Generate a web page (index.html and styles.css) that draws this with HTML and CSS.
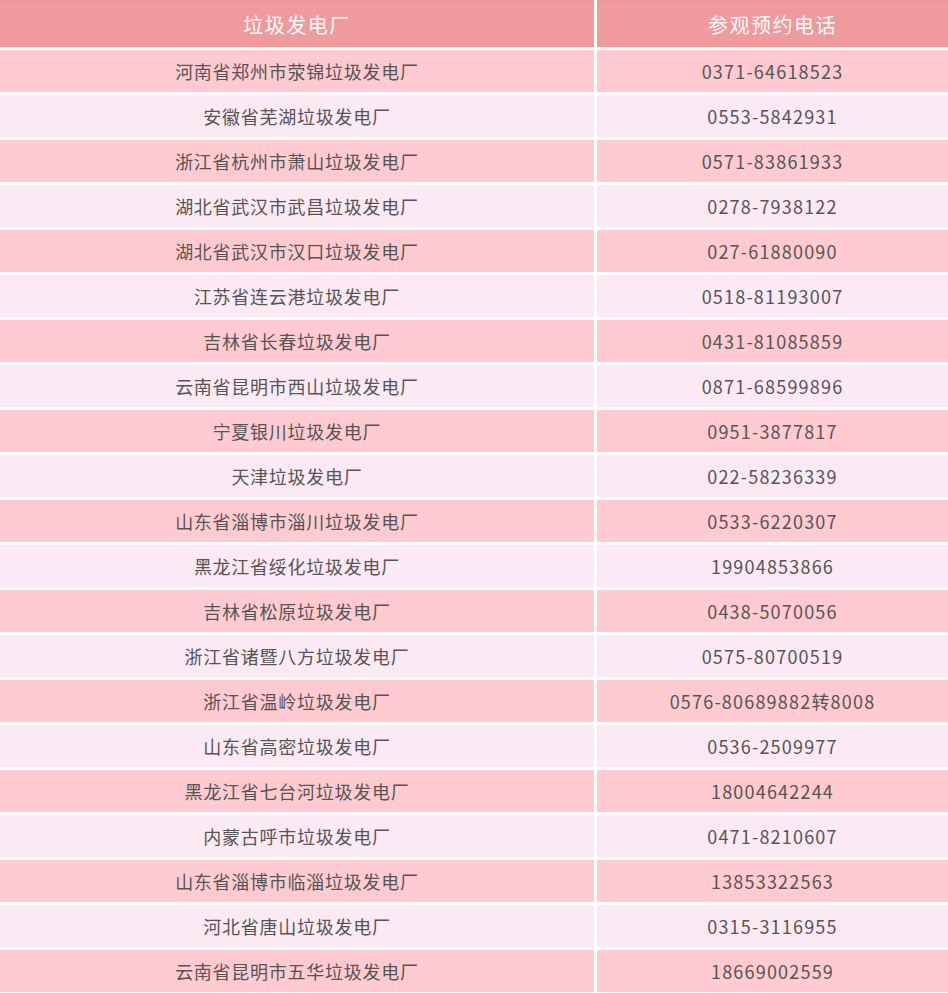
FILE: index.html
```html
<!DOCTYPE html>
<html lang="zh-CN">
<head>
<meta charset="utf-8">
<title>垃圾发电厂参观预约电话</title>
<link rel="stylesheet" href="styles.css">
</head>
<body>
<div class="table">
  <div class="cell head">垃圾发电厂</div><div class="cell head">参观预约电话</div>
  <div class="cell odd">河南省郑州市荥锦垃圾发电厂</div><div class="cell odd num">0371-64618523</div>
  <div class="cell even">安徽省芜湖垃圾发电厂</div><div class="cell even num">0553-5842931</div>
  <div class="cell odd">浙江省杭州市萧山垃圾发电厂</div><div class="cell odd num">0571-83861933</div>
  <div class="cell even">湖北省武汉市武昌垃圾发电厂</div><div class="cell even num">0278-7938122</div>
  <div class="cell odd">湖北省武汉市汉口垃圾发电厂</div><div class="cell odd num">027-61880090</div>
  <div class="cell even">江苏省连云港垃圾发电厂</div><div class="cell even num">0518-81193007</div>
  <div class="cell odd">吉林省长春垃圾发电厂</div><div class="cell odd num">0431-81085859</div>
  <div class="cell even">云南省昆明市西山垃圾发电厂</div><div class="cell even num">0871-68599896</div>
  <div class="cell odd">宁夏银川垃圾发电厂</div><div class="cell odd num">0951-3877817</div>
  <div class="cell even">天津垃圾发电厂</div><div class="cell even num">022-58236339</div>
  <div class="cell odd">山东省淄博市淄川垃圾发电厂</div><div class="cell odd num">0533-6220307</div>
  <div class="cell even">黑龙江省绥化垃圾发电厂</div><div class="cell even num">19904853866</div>
  <div class="cell odd">吉林省松原垃圾发电厂</div><div class="cell odd num">0438-5070056</div>
  <div class="cell even">浙江省诸暨八方垃圾发电厂</div><div class="cell even num">0575-80700519</div>
  <div class="cell odd">浙江省温岭垃圾发电厂</div><div class="cell odd num">0576-80689882转8008</div>
  <div class="cell even">山东省高密垃圾发电厂</div><div class="cell even num">0536-2509977</div>
  <div class="cell odd">黑龙江省七台河垃圾发电厂</div><div class="cell odd num">18004642244</div>
  <div class="cell even">内蒙古呼市垃圾发电厂</div><div class="cell even num">0471-8210607</div>
  <div class="cell odd">山东省淄博市临淄垃圾发电厂</div><div class="cell odd num">13853322563</div>
  <div class="cell even">河北省唐山垃圾发电厂</div><div class="cell even num">0315-3116955</div>
  <div class="cell odd">云南省昆明市五华垃圾发电厂</div><div class="cell odd num">18669002559</div>
</div>
</body>
</html>
```
FILE: styles.css
```css
html, body {
  margin: 0;
  padding: 0;
  background: #ffffff;
}
.table {
  display: grid;
  grid-template-columns: 594px 351px;
  grid-template-rows: 47px;
  grid-auto-rows: 42px;
  gap: 3px;
  width: 948px;
  font-family: "Noto Sans CJK SC", "Noto Sans", sans-serif;
}
.cell {
  display: flex;
  align-items: center;
  justify-content: center;
  font-size: 18px;
  letter-spacing: 0.75px;
  color: #555555;
  white-space: nowrap;
}
.num {
  letter-spacing: 1.2px;
}
.head {
  background: #ef9a9d;
  color: #ffffff;
  font-size: 20px;
  letter-spacing: 1.5px;
  border-top: 1px solid #e6969a;
  box-sizing: border-box;
}
.odd {
  background: #ffcbd0;
}
.even {
  background: #fbeaf3;
}
```
